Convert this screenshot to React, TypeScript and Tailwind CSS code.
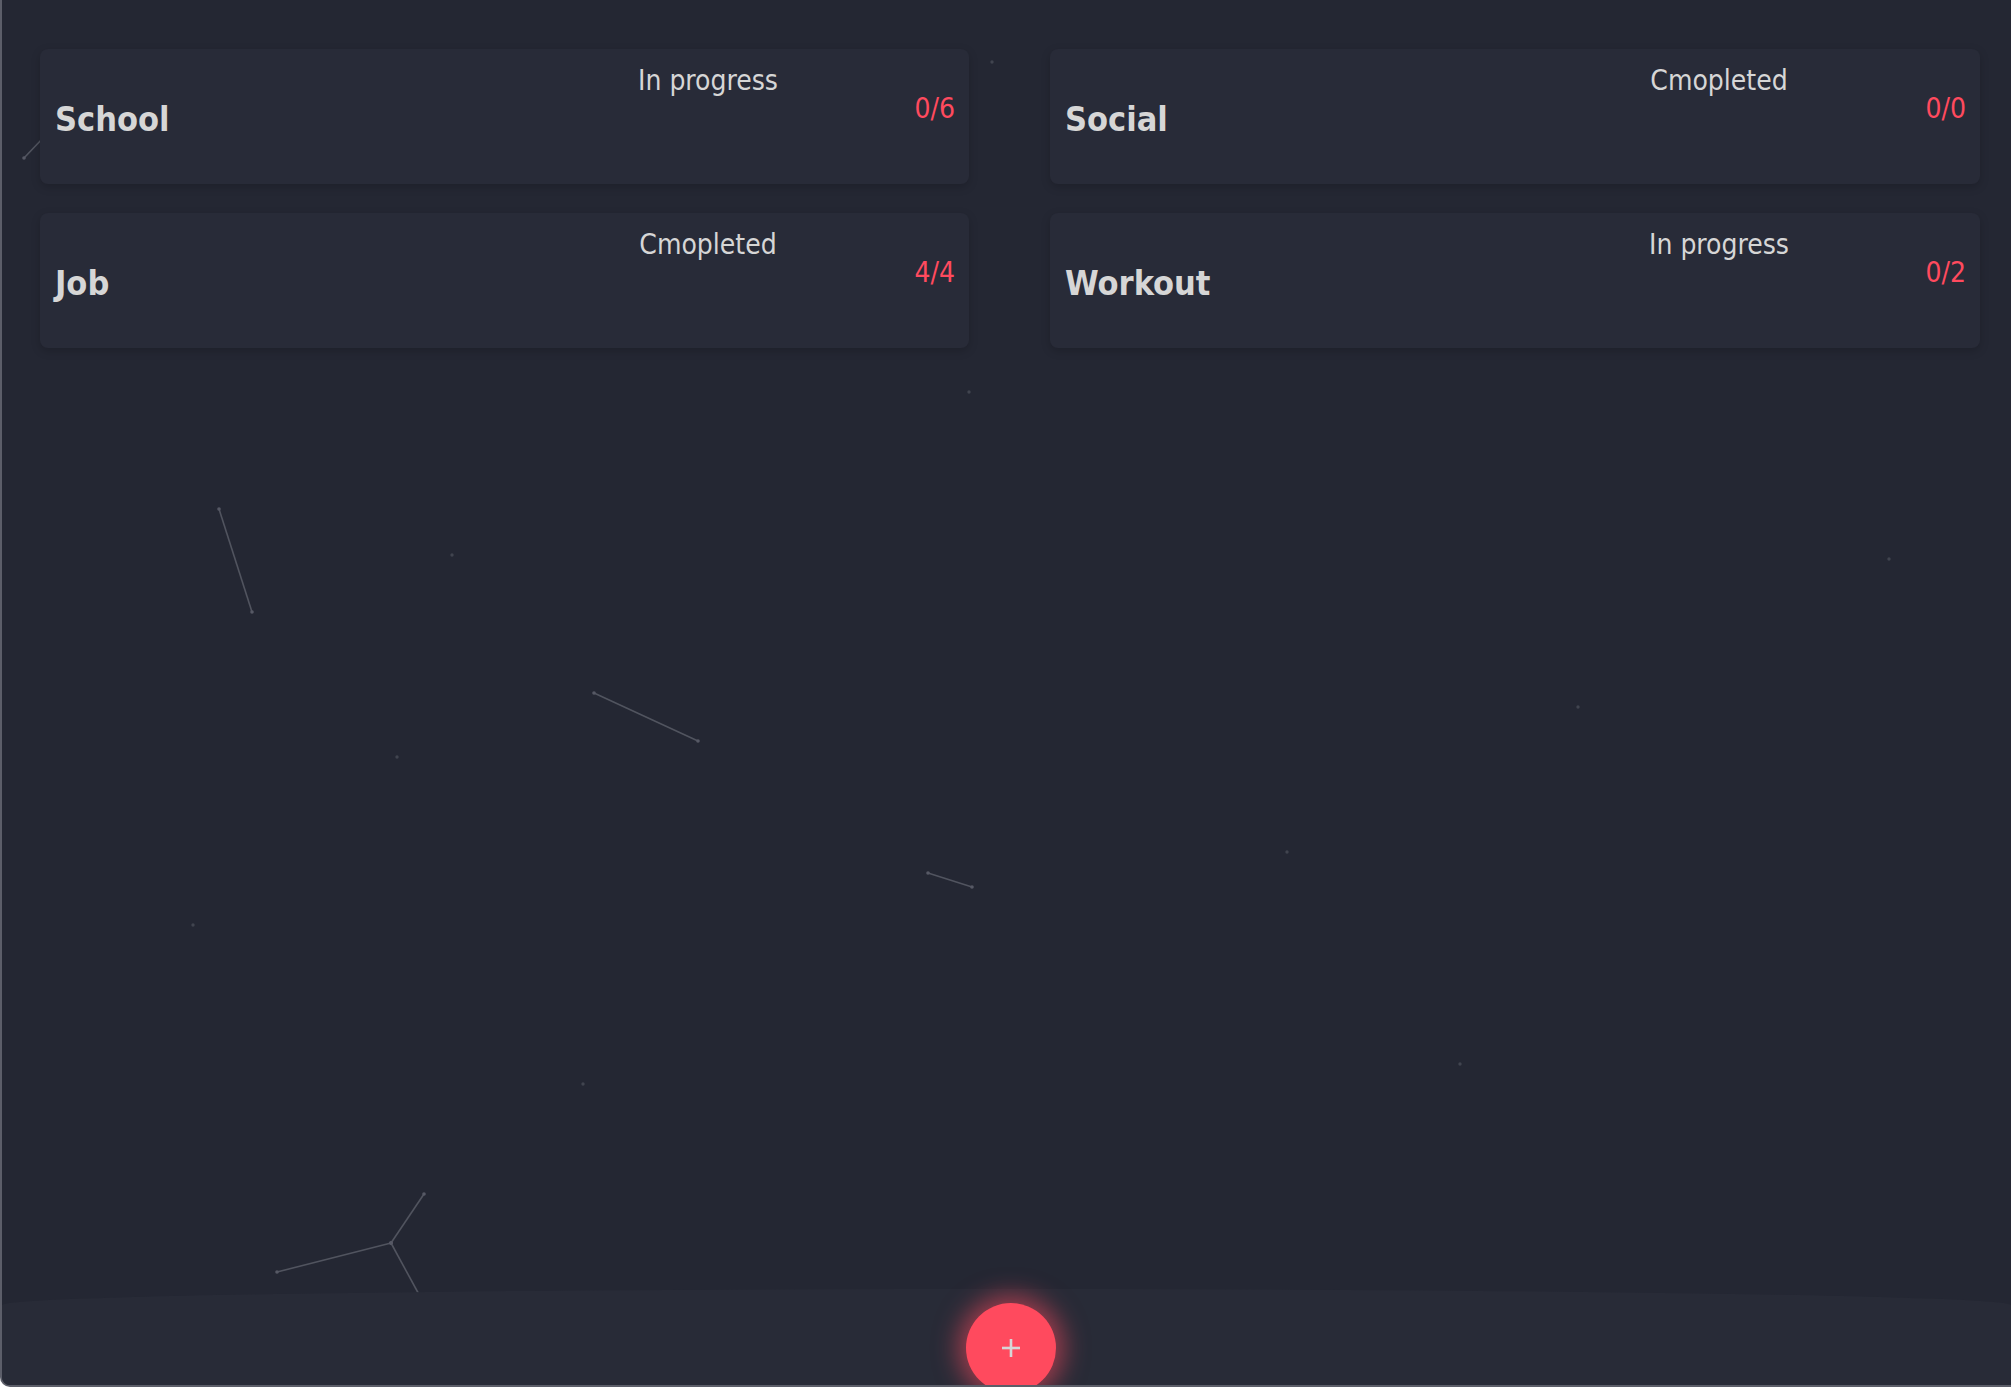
import React from "react";

const cards = [
  { title: "School", status: "In progress", count: "0/6" },
  { title: "Social", status: "Cmopleted", count: "0/0" },
  { title: "Job", status: "Cmopleted", count: "4/4" },
  { title: "Workout", status: "In progress", count: "0/2" },
];

const lines: [number, number, number, number][] = [
  [22, 158, 62, 116],
  [217, 509, 250, 612],
  [592, 693, 696, 741],
  [926, 873, 970, 887],
  [275, 1272, 389, 1243],
  [389, 1243, 422, 1194],
  [389, 1243, 420, 1300],
];

const dots: [number, number][] = [
  [990, 62],
  [967, 392],
  [450, 555],
  [395, 757],
  [191, 925],
  [581, 1084],
  [1285, 852],
  [1576, 707],
  [1887, 559],
  [1458, 1064],
];

function Card({ title, status, count }: { title: string; status: string; count: string }) {
  return (
    <div className="flex h-[135px] rounded-[8px] bg-[#282b38] pl-[15px] pr-[14px] shadow-[0_3px_10px_rgba(0,0,0,0.18)]">
      <div className="flex-1 self-center pt-[6px] text-[34px] font-bold text-[#d6d6d6]">{title}</div>
      <div className="flex w-[494px] flex-col pt-[18px] text-[28px] leading-[28px]">
        <div className="text-center text-[#d6d6d6]">{status}</div>
        <div className="text-right text-[#ff4a5e]">{count}</div>
      </div>
    </div>
  );
}

export default function App() {
  return (
    <div
      className="relative flex h-[1387px] w-full flex-col overflow-hidden rounded-bl-[10px] border-b-2 border-l-2 border-[#5c5e69] bg-[#242733]"
      style={{ fontFamily: '"DejaVu Sans Condensed", "DejaVu Sans", sans-serif', fontStretch: "condensed" }}
    >
      <svg className="absolute left-0 top-0" width="2011" height="1387">
        {lines.map(([x1, y1, x2, y2], i) => (
          <line key={i} x1={x1} y1={y1} x2={x2} y2={y2} stroke="#51545f" strokeWidth="1.6" />
        ))}
        {lines.map(([x1, y1, x2, y2], i) => (
          <g key={"e" + i}>
            <circle cx={x1} cy={y1} r="1.8" fill="#565965" />
            <circle cx={x2} cy={y2} r="1.8" fill="#565965" />
          </g>
        ))}
        {dots.map(([x, y], i) => (
          <circle key={"d" + i} cx={x} cy={y} r="1.7" fill="#41444f" />
        ))}
      </svg>

      <div className="relative grid grid-cols-[929px_930px] gap-x-[81px] gap-y-[29px] pl-[38px] pr-[31px] pt-[49px]">
        {cards.map((c) => (
          <Card key={c.title} {...c} />
        ))}
      </div>

      <div className="flex-1" />

      <div className="relative flex h-[96px] justify-center rounded-tl-[1005px_16px] rounded-tr-[1005px_16px] bg-[#282b37] pt-[14px]">
        <button className="ml-[8px] flex h-[90px] w-[90px] shrink-0 items-center justify-center rounded-full bg-[#ff4a5e] shadow-[0_0_24px_8px_rgba(255,74,94,0.55)]">
          <svg width="18" height="18" viewBox="0 0 18 18">
            <rect x="7.7" y="0" width="2.6" height="18" fill="#d6d6d6" />
            <rect x="0" y="7.7" width="18" height="2.6" fill="#d6d6d6" />
          </svg>
        </button>
      </div>
    </div>
  );
}
